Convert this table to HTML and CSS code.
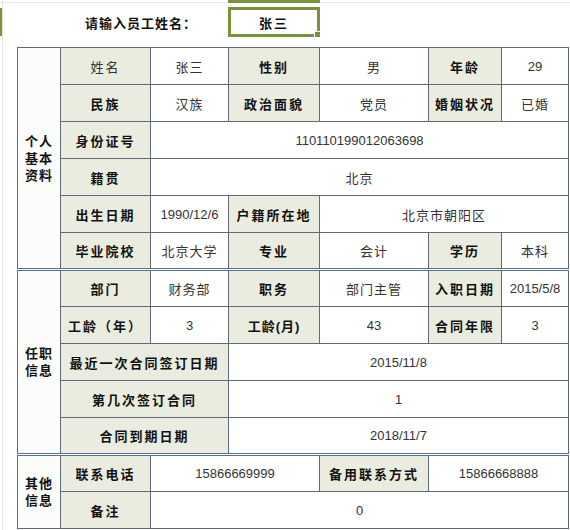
FILE: index.html
```html
<!DOCTYPE html>
<html lang="zh">
<head>
<meta charset="utf-8">
<title>员工信息表</title>
<link rel="stylesheet" href="styles.css">
</head>
<body>
<div class="topbar"></div>
<div class="header">
  <div class="rowmark"></div>
  <div class="prompt">请输入员工姓名：</div>
  <div class="namebox">张三</div>
</div>
<table class="sheet">
  <colgroup>
    <col class="c1"><col class="c2"><col class="c3"><col class="c4"><col class="c5"><col class="c6"><col class="c7">
  </colgroup>
  <tbody>
    <tr>
      <td class="cat" rowspan="6">个人<br>基本<br>资料</td>
      <td class="lab plain">姓名</td><td>张三</td>
      <td class="lab">性别</td><td>男</td>
      <td class="lab">年龄</td><td class="num">29</td>
    </tr>
    <tr>
      <td class="lab">民族</td><td>汉族</td>
      <td class="lab">政治面貌</td><td>党员</td>
      <td class="lab">婚姻状况</td><td>已婚</td>
    </tr>
    <tr>
      <td class="lab">身份证号</td><td class="num" colspan="5">110110199012063698</td>
    </tr>
    <tr>
      <td class="lab">籍贯</td><td colspan="5">北京</td>
    </tr>
    <tr>
      <td class="lab">出生日期</td><td class="num">1990/12/6</td>
      <td class="lab">户籍所在地</td><td colspan="3">北京市朝阳区</td>
    </tr>
    <tr>
      <td class="lab">毕业院校</td><td>北京大学</td>
      <td class="lab">专业</td><td>会计</td>
      <td class="lab">学历</td><td>本科</td>
    </tr>
    <tr class="sect">
      <td class="cat" rowspan="5">任职<br>信息</td>
      <td class="lab">部门</td><td>财务部</td>
      <td class="lab">职务</td><td>部门主管</td>
      <td class="lab">入职日期</td><td class="num">2015/5/8</td>
    </tr>
    <tr>
      <td class="lab">工龄（年）</td><td class="num">3</td>
      <td class="lab tight">工龄(月)</td><td class="num">43</td>
      <td class="lab">合同年限</td><td class="num">3</td>
    </tr>
    <tr>
      <td class="lab" colspan="2">最近一次合同签订日期</td><td class="num" colspan="4">2015/11/8</td>
    </tr>
    <tr>
      <td class="lab" colspan="2">第几次签订合同</td><td class="num" colspan="4">1</td>
    </tr>
    <tr>
      <td class="lab" colspan="2">合同到期日期</td><td class="num" colspan="4">2018/11/7</td>
    </tr>
    <tr class="sect">
      <td class="cat" rowspan="2">其他<br>信息</td>
      <td class="lab">联系电话</td><td class="num" colspan="2">15866669999</td>
      <td class="lab">备用联系方式</td><td class="num" colspan="2">15866668888</td>
    </tr>
    <tr>
      <td class="lab">备注</td><td class="num" colspan="5">0</td>
    </tr>
  </tbody>
</table>
</body>
</html>
```

FILE: styles.css
```css
html, body {
  margin: 0;
  padding: 0;
}
body {
  width: 570px;
  height: 530px;
  overflow: hidden;
  background:
    linear-gradient(#e4e4e4, #e4e4e4) 2px 0 / 1px 100% no-repeat,
    linear-gradient(#e8e8e8, #e8e8e8) 0 2px / 100% 1px no-repeat,
    #ffffff;
  font-family: "Liberation Sans", "Noto Sans CJK SC", sans-serif;
  color: #2a2a2a;
}
.topbar {
  margin-left: 228px;
  width: 92px;
  height: 3px;
  background: #77933c;
}
.header {
  display: flex;
  align-items: center;
  height: 38px;
}
.rowmark {
  width: 2px;
  height: 28px;
  background: #77933c;
}
.prompt {
  width: 226px;
  box-sizing: border-box;
  padding-left: 83px;
  font-size: 13px;
  font-weight: bold;
  letter-spacing: 1px;
  color: #111;
}
.namebox {
  position: relative;
  width: 92px;
  height: 30px;
  box-sizing: border-box;
  border: 3px solid #77933c;
  display: flex;
  align-items: center;
  justify-content: center;
  font-size: 13px;
  font-weight: bold;
  letter-spacing: 2px;
  color: #111;
}
.namebox::after {
  content: "";
  position: absolute;
  right: -4px;
  bottom: -4px;
  width: 5px;
  height: 5px;
  background: #77933c;
  border: 1px solid #fff;
}
.sheet {
  margin-top: 6px;
  margin-left: 17px;
  width: 552px;
  table-layout: fixed;
  border-collapse: collapse;
}
.c1 { width: 43px; }
.c2 { width: 90px; }
.c3 { width: 78px; }
.c4 { width: 91px; }
.c5 { width: 109px; }
.c6 { width: 73px; }
.c7 { width: 67px; }
.sheet tr {
  height: 37px;
}
.sheet td {
  border: 1px solid #5e6a76;
  padding: 0;
  text-align: center;
  vertical-align: middle;
  font-size: 13px;
  letter-spacing: 1px;
  color: #333;
  white-space: nowrap;
  overflow: hidden;
}
.sheet td.num {
  letter-spacing: 0;
}
.sheet tr.sect td {
  border-top: 3px double #56708c;
}
.sheet td.cat {
  background: #fcfcfa;
  font-weight: bold;
  color: #111;
  line-height: 17px;
  letter-spacing: 1px;
  text-align: center;
}
.sheet td.lab {
  background: #e9ecdf;
  font-weight: bold;
  color: #111;
  letter-spacing: 2px;
}
.sheet td.lab.plain {
  font-weight: normal;
  color: #333;
}
.sheet td.lab.tight {
  letter-spacing: 1px;
}
```
